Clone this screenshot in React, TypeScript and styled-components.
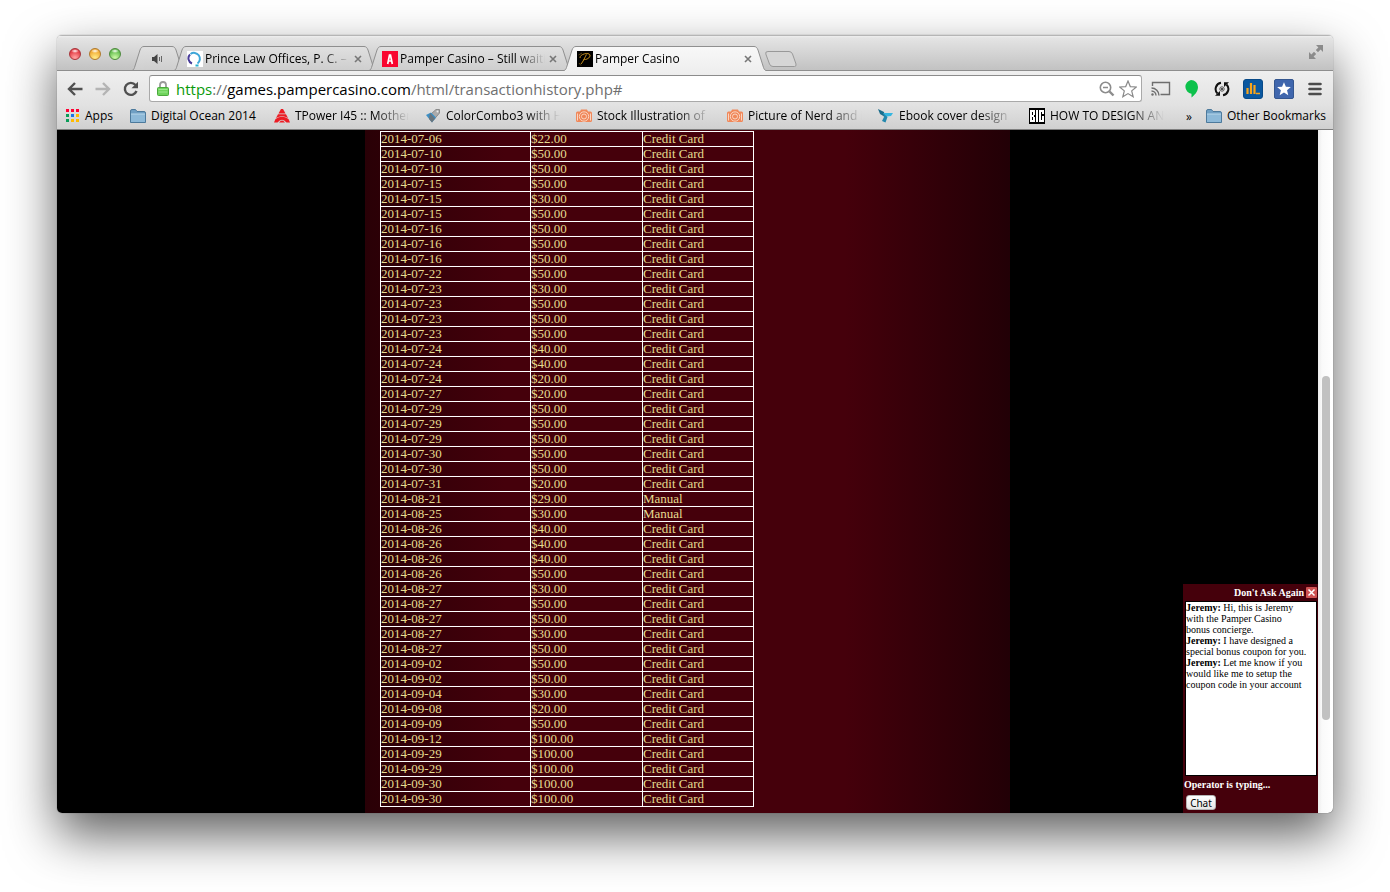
import React, { useState } from 'react';
import styled, { createGlobalStyle } from 'styled-components';

const UI = '"Noto Sans", "Open Sans", sans-serif';
const UI_NARROW = '"Open Sans", "Noto Sans", sans-serif';
const SERIF = '"Liberation Serif", "DejaVu Serif", serif';

const GlobalStyle = createGlobalStyle`
  *, *::before, *::after { box-sizing: border-box; }
  body { margin: 0; background: #fff; font-family: ${UI}; font-size: 12px; color: #000; }
  button { font: inherit; color: inherit; border: 0; padding: 0; background: none; }
  svg { display: block; flex: none; }
`;

const Desktop = styled.div`
  display: flex;
  min-height: 100vh;
  padding: 35px 57px 79px;
`;

const BrowserWindow = styled.div`
  flex: 1;
  min-width: 0;
  display: flex;
  flex-direction: column;
  overflow: hidden;
  border-radius: 5px;
  box-shadow: 0 22px 50px rgba(0, 0, 0, 0.63), 0 0 1px rgba(0, 0, 0, 0.6);
`;

/* ---------- tab strip ---------- */

const TabStrip = styled.header`
  display: flex;
  align-items: flex-end;
  height: 36px;
  padding-left: 12px;
  background: linear-gradient(#f4f4f4 0, #e4e4e4 3px, #c3c3c3 34px);
  box-shadow: inset 0 -1px #8e8e8e, inset 0 1px #b5b5b5;
`;

const Lights = styled.div`
  display: flex;
  align-self: flex-start;
  gap: 8px;
  width: 63px;
  padding-top: 13px;
`;

const Light = styled.button<{ $rim: string; $fill: string; $glow: string }>`
  width: 12px;
  height: 12px;
  border-radius: 50%;
  border: 1px solid ${(p) => p.$rim};
  background: radial-gradient(ellipse 4px 2px at 50% 20%, #fff, transparent),
    radial-gradient(circle at 50% 90%, ${(p) => p.$glow} 10%, ${(p) => p.$fill} 75%);
`;

const TabBox = styled.div<{ $small?: boolean; $active?: boolean }>`
  position: relative;
  z-index: ${(p) => (p.$active ? 2 : 1)};
  display: flex;
  flex: 0 1 ${(p) => (p.$small ? 52 : 202)}px;
  min-width: 50px;
  height: 25px;
  margin-right: ${(p) => (p.$small ? -10 : -7)}px;
`;

const TabMiddle = styled.div<{ $active?: boolean; $center?: boolean }>`
  flex: 1;
  min-width: 0;
  display: flex;
  align-items: center;
  justify-content: ${(p) => (p.$center ? 'center' : 'flex-start')};
  gap: 2px;
  padding-left: ${(p) => (p.$center ? 0 : 1)}px;
  border-top: 1px solid #8f8f8f;
  border-bottom: 1px solid ${(p) => (p.$active ? '#efefef' : '#8e8e8e')};
  background: ${(p) => (p.$active ? 'linear-gradient(#f8f8f8, #efefef)' : 'linear-gradient(#e0e0e0, #cecece)')};
`;

const TabTitle = styled.span`
  flex: 1;
  min-width: 0;
  overflow: hidden;
  white-space: nowrap;
  font-family: ${UI_NARROW};
  line-height: 20px;
  mask-image: linear-gradient(90deg, #000 calc(100% - 28px), transparent);
`;

const TabClose = styled.button`
  display: flex;
  width: 12px;
  height: 20px;
  align-items: center;
  justify-content: center;
`;

const NewTab = styled.button`
  align-self: flex-end;
  margin: 0 0 4px 6px;
`;

const FullScreen = styled.button`
  align-self: flex-start;
  margin: 10px 10px 0 auto;
`;

function TabEdge({ side, active }: { side: 'left' | 'right'; active?: boolean }) {
  const id = `edge-${side}-${active ? 'on' : 'off'}`;
  return (
    <svg width="12" height="25" viewBox="0 0 12 25" aria-hidden="true">
      <defs>
        <linearGradient id={id} x1="0" y1="0" x2="0" y2="1">
          <stop offset="0" stopColor={active ? '#f8f8f8' : '#e0e0e0'} />
          <stop offset="1" stopColor={active ? '#efefef' : '#cecece'} />
        </linearGradient>
      </defs>
      <g transform={side === 'right' ? 'matrix(-1 0 0 1 12 0)' : undefined}>
        <path d="M0 24.500C1.500 24 2 23 2.500 21.500L8 4C9 1.500 10 .5 12 .5V25H0Z" fill={`url(#${id})`} />
        <path d="M0 24.500C1.500 24 2 23 2.500 21.500L8 4C9 1.500 10 .5 12 .5" fill="none" stroke="#8f8f8f" />
        {!active && <path d="M0 24.500H12" stroke="#8e8e8e" />}
      </g>
    </svg>
  );
}

function Tab({ title, icon, active }: { title: string; icon: React.ReactNode; active?: boolean }) {
  return (
    <TabBox $active={active}>
      <TabEdge side="left" active={active} />
      <TabMiddle $active={active}>
        {icon}
        <TabTitle>{title}</TabTitle>
        <TabClose aria-label={`Close ${title}`}>
          <svg width="8" height="8" viewBox="0 0 8 8">
            <path d="M1 1l6 6M7 1L1 7" stroke="#777" strokeWidth="1.600" />
          </svg>
        </TabClose>
      </TabMiddle>
      <TabEdge side="right" active={active} />
    </TabBox>
  );
}

/* ---------- toolbar ---------- */

const Toolbar = styled.nav`
  display: flex;
  align-items: center;
  height: 34px;
  padding: 1px 3px 0 9px;
  background: linear-gradient(#efefef, #e2e2e2);
`;

const ToolButton = styled.button<{ $w: number }>`
  display: flex;
  flex: none;
  align-items: center;
  justify-content: center;
  width: ${(p) => p.$w}px;
  height: 26px;
`;

const Omnibox = styled.form`
  flex: 1;
  min-width: 0;
  display: flex;
  align-items: center;
  height: 27px;
  margin: 0 4px 0 10px;
  padding: 0 3px 0 7px;
  border: 1px solid #a9a9a9;
  border-top-color: #8c8c8c;
  border-radius: 3px;
  background: #fff;
`;

const AddressField = styled.div`
  position: relative;
  flex: 1;
  min-width: 0;
  margin-left: 7px;
  overflow: hidden;
  font-family: ${UI_NARROW};
  font-size: 15px;
  line-height: 24px;
`;

const AddressInput = styled.input`
  position: absolute;
  inset: 0;
  width: 100%;
  border: 0;
  padding: 0;
  outline: 0;
  background: transparent;
  font: inherit;
`;

const AddressText = styled.label<{ $hidden: boolean }>`
  display: block;
  white-space: nowrap;
  color: #6f6f6f;
  visibility: ${(p) => (p.$hidden ? 'hidden' : 'visible')};
  b { font-weight: 400; color: #000; }
  i { font-style: normal; color: #0a9a0a; }
`;

/* ---------- bookmarks ---------- */

const Bookmarks = styled.nav`
  display: flex;
  align-items: center;
  gap: 16px;
  height: 25px;
  padding: 0 10px 2px 9px;
  background: linear-gradient(#e2e2e2, #d0d0d0);
  border-bottom: 1px solid #7f7f7f;
  font-family: ${UI_NARROW};
`;

const Bookmark = styled.a<{ $w: number; $fade?: boolean }>`
  display: flex;
  flex: 0 0 ${(p) => p.$w}px;
  min-width: 0;
  align-items: center;
  gap: 5px;
  color: #000;
  text-decoration: none;
  white-space: nowrap;
  span {
    flex: 1;
    min-width: 0;
    overflow: ${(p) => (p.$fade ? 'hidden' : 'visible')};
    line-height: 20px;
    mask-image: ${(p) => (p.$fade ? 'linear-gradient(90deg, #000 calc(100% - 34px), transparent)' : 'none')};
  }
`;

const Overflow = styled.button`
  margin-left: auto;
  margin-right: -4px;
  width: 10px;
`;

/* ---------- page ---------- */

const Viewport = styled.div`
  position: relative;
  flex: 1;
  display: flex;
  background: #000;
`;

const Page = styled.main`
  flex: 1;
  min-width: 0;
  display: flex;
  justify-content: center;
`;

const Panel = styled.section`
  flex: 0 1 645px;
  padding: 1px 15px 6px;
  background: linear-gradient(90deg, #290006 0, #45000b 140px, #45000b 480px, #220006 100%);
`;

const History = styled.table`
  table-layout: fixed;
  width: 374px;
  border-collapse: collapse;
  color: #e6dc90;
  font-family: ${SERIF};
  font-size: 13px;
  line-height: 14px;
  td {
    height: 15px;
    padding: 0;
    border: 1px solid #fff;
    white-space: nowrap;
  }
`;

const ScrollTrack = styled.div`
  display: flex;
  flex-direction: column;
  flex: 0 0 15px;
  padding: 0 3px 0 4px;
  background: linear-gradient(90deg, #ececec, #fafafa 4px, #fff);
`;

const ScrollSpace = styled.div<{ $grow: number }>`
  flex: ${(p) => p.$grow} 0 0;
`;

const ScrollThumb = styled.div`
  flex: 344 0 0;
  border-radius: 4px;
  background: #c1c1c1;
`;

/* ---------- chat ---------- */

const Chat = styled.aside`
  position: absolute;
  right: 15px;
  bottom: 0;
  width: 135px;
  background: #45000b;
  color: #fff;
  font-family: ${SERIF};
  font-size: 10px;
  line-height: 11px;
`;

const ChatHeader = styled.div`
  display: flex;
  align-items: center;
  justify-content: flex-end;
  gap: 2px;
  height: 17px;
  padding-right: 1px;
  font-weight: 700;
`;

const ChatLog = styled.div`
  height: 175px;
  margin: 0 1px 0 2px;
  border: 1px solid #000;
  background: #fff;
  color: #000;
  p { margin: 0; white-space: nowrap; }
  b { font-weight: 700; }
`;

const ChatStatus = styled.div`
  padding: 3px 1px 5px;
  font-weight: 700;
`;

const ChatButton = styled.button`
  display: block;
  width: 30px;
  height: 15px;
  margin: 0 0 3px 3px;
  border: 1px solid #b5b5b5;
  border-radius: 3px;
  background: linear-gradient(#fff, #e6e6e6);
  color: #000;
  font-family: ${UI};
  font-size: 10px;
  line-height: 12px;
`;

/* ---------- icons ---------- */

const Folder = () => (
  <svg width="16" height="14" viewBox="0 0 16 14">
    <path d="M.5 2Q.5.500 2 .5H5.500L7 2.500H14Q15.500 2.500 15.500 4V13.500H.5Z" fill="#6f9fc3" stroke="#4d7a9c" />
    <path d="M1 5H15V13H1Z" fill="#8db9d8" />
    <path d="M1 5H15" stroke="#b9d7ea" />
  </svg>
);

const AppsGrid = () => (
  <svg width="14" height="14" viewBox="0 0 14 14">
    {['#f03', '#f03', '#f03', '#0a9d58', '#1a73e8', '#fb0', '#0a9d58', '#fb0', '#fb0'].map((c, i) => (
      <rect key={i} x={(i % 3) * 5} y={Math.floor(i / 3) * 5} width="3" height="3" fill={c} />
    ))}
  </svg>
);

const Triangle = () => (
  <svg width="16" height="14" viewBox="0 0 16 14">
    <path d="M7 0H9L11.500 4.500H4.500Z" fill="#ec1c24" />
    <path d="M4 5.300H12L14 9Q8 5.500 2 9Z" fill="#ec1c24" />
    <path d="M1.500 10Q8 5.500 14.500 10L16 13.500H12.500Q8 8 3.500 13.500H0Z" fill="#ec1c24" />
    <path d="M5 13.500Q8 9.500 11 13.500Z" fill="#ec1c24" />
  </svg>
);

const Tag = () => (
  <svg width="16" height="16" viewBox="0 0 16 16">
    <path d="M6 6L11 1.500L14.500 1.500L14.500 5L9 11.500Z" fill="#ababab" stroke="#8c8c8c" />
    <path d="M1 7L6 4.500L11 9.500L7 14.500Z" fill="#3c8fc5" />
    <path d="M5 5L10 10.500L7 14.500L4 11Z" fill="#69757d" />
    <circle cx="12.500" cy="3.500" r="1" fill="#eee" />
  </svg>
);

const Camera = () => (
  <svg width="16" height="14" viewBox="0 0 16 14">
    <path d="M5 .5H11L12 2.500H14.500Q16 2.500 16 4V11.500Q16 13 14.500 13H1.500Q0 13 0 11.500V4Q0 2.500 1.500 2.500H4Z" fill="#f0885a" />
    <circle cx="8" cy="7.500" r="4.700" fill="none" stroke="#f9d5c2" />
    <circle cx="8" cy="7.500" r="2.500" fill="none" stroke="#f9d5c2" />
    <path d="M1.500 4.500V11.500M14.500 4.500V11.500" stroke="#f9d5c2" />
  </svg>
);

const Bird = () => (
  <svg width="16" height="14" viewBox="0 0 16 14">
    <path d="M0 0L6 3L7 8L2 5Z" fill="#1b6d8c" />
    <path d="M5 4H15L13 7L8 7.500Z" fill="#35b6e0" />
    <path d="M5 4L9.500 8L7.500 13.500L4 12L6 8Z" fill="#2388ad" />
  </svg>
);

const BigLogo = () => (
  <svg width="16" height="16" viewBox="0 0 16 16" shapeRendering="crispEdges">
    <rect width="16" height="16" fill="#000" />
    <rect x="1" y="2" width="5" height="12" fill="#fff" />
    <rect x="3" y="4" width="1" height="3" />
    <rect x="3" y="9" width="1" height="3" />
    <rect x="5" y="7" width="1" height="2" />
    <rect x="7" y="2" width="2" height="12" fill="#fff" />
    <rect x="10" y="2" width="5" height="12" fill="#fff" />
    <rect x="12" y="4" width="1" height="8" />
    <rect x="13" y="6" width="2" height="2" />
  </svg>
);

const RingLogo = () => (
  <svg width="16" height="16" viewBox="0 0 16 16">
    <rect width="16" height="16" fill="#fff" />
    <path d="M3 3.500A5.500 5.500 0 0 0 5 12.500" fill="none" stroke="#4a3d9a" strokeWidth="2" />
    <path d="M3.500 3A5.500 5.500 0 1 1 10.500 12.500" fill="none" stroke="#3ea6d8" strokeWidth="2" />
    <path d="M8.500 14.500h3" stroke="#2ab0cf" strokeWidth="2" />
  </svg>
);

const RedLogo = () => (
  <svg width="16" height="16" viewBox="0 0 16 16">
    <rect width="16" height="16" fill="#f9052f" />
    <path d="M5.700 13L7.500 4H8.500L10.300 13M6.500 10H9.500" fill="none" stroke="#fff" strokeWidth="1.700" />
  </svg>
);

const CasinoLogo = () => (
  <svg width="16" height="16" viewBox="0 0 16 16">
    <rect width="16" height="16" fill="#000" />
    <path d="M4 13C6 11 8 6 9.500 3.500M3 7C2.500 3 12 1 13 4C13.500 7 9 9 6.500 8.500" fill="none" stroke="#c8921e" />
    <path d="M1.500 4L5 2M2 12L4 14.500" stroke="#5a420f" />
  </svg>
);

const Speaker = () => (
  <svg width="12" height="10" viewBox="0 0 12 10">
    <path d="M0 3H2L5.500 0V10L2 7H0Z" fill="#444" />
    <path d="M7.500 3V7M9.500 2V8" stroke="#666" />
  </svg>
);

const Back = ({ color }: { color: string }) => (
  <svg width="16" height="14" viewBox="0 0 16 14">
    <path d="M8 1L2 7L8 13M2 7H15.500" fill="none" stroke={color} strokeWidth="2.400" />
  </svg>
);

const Forward = ({ color }: { color: string }) => (
  <svg width="16" height="14" viewBox="0 0 16 14">
    <path d="M8 1L14 7L8 13M14 7H.5" fill="none" stroke={color} strokeWidth="2.400" />
  </svg>
);

const Reload = () => (
  <svg width="16" height="16" viewBox="0 0 16 16">
    <path d="M12.500 4A6 6 0 1 0 13.500 10" fill="none" stroke="#505050" strokeWidth="2.400" />
    <path d="M15 .8V7.200H8.500Z" fill="#505050" />
  </svg>
);

const Lock = () => (
  <svg width="12" height="15" viewBox="0 0 12 15">
    <path d="M3 7V4Q3 1 6 1T9 4V7" fill="none" stroke="#9a9a9a" strokeWidth="1.800" />
    <rect x=".5" y="6.500" width="11" height="8" rx="1" fill="#6fd45c" stroke="#4ba83c" />
    <path d="M1.500 8.500H10.500M1.500 11H10.500" stroke="#9be88c" />
  </svg>
);

const ZoomOut = () => (
  <svg width="16" height="16" viewBox="0 0 16 16">
    <circle cx="6.500" cy="6.500" r="5.200" fill="none" stroke="#8c8c8c" strokeWidth="1.600" />
    <path d="M4 6.500H9" stroke="#8c8c8c" strokeWidth="1.500" />
    <path d="M10.500 10.500L14.500 14.500" stroke="#8c8c8c" strokeWidth="2.400" />
  </svg>
);

const STAR = 'M9 1L11.300 6.600L17.300 7L12.700 10.900L14.200 16.800L9 13.600L3.800 16.800L5.300 10.900L.7 7L6.700 6.600Z';

const StarOutline = () => (
  <svg width="18" height="18" viewBox="0 0 18 18">
    <path d={STAR} fill="#fff" stroke="#8a8a8a" strokeWidth="1.200" />
  </svg>
);

const Cast = () => (
  <svg width="20" height="15" viewBox="0 0 20 15">
    <path d="M1.500 5V1.500H18.500V13.500H9.500" fill="none" stroke="#6e6e6e" strokeWidth="1.400" />
    <path d="M.5 7A7.500 7.500 0 0 1 8 14.500M.5 10A4.500 4.500 0 0 1 5 14.500" fill="none" stroke="#6e6e6e" strokeWidth="1.400" />
    <circle cx="1.500" cy="13.500" r="1.200" fill="#6e6e6e" />
  </svg>
);

const Bubble = () => (
  <svg width="14" height="18" viewBox="0 0 14 18">
    <path d="M7 0A7 7 0 0 1 14 7C14 12 10 15.500 7.500 17.500V13.800A7 7 0 0 1 7 0Z" fill="#0cc14b" />
  </svg>
);

const Sync = () => (
  <svg width="16" height="16" viewBox="0 0 16 16">
    <path d="M7 1.800A6.300 6.300 0 0 0 3.500 12.500M9 14.200A6.300 6.300 0 0 0 12.500 3.500" fill="none" stroke="#111" strokeWidth="2" />
    <path d="M1 14.800H6V10ZM15 1.200H10V6Z" fill="#111" />
    <circle cx="8" cy="8" r="2.200" fill="none" stroke="#555" />
    <circle cx="8" cy="8" r="1" fill="#222" />
  </svg>
);

const Bars = () => (
  <svg width="20" height="20" viewBox="0 0 20 20">
    <rect x=".5" y=".5" width="19" height="19" rx="2.500" fill="#0a58a0" stroke="#084a88" />
    <path d="M4.500 15V9M8 15V4M11.500 15V6" stroke="#f8a51b" strokeWidth="2.200" />
    <path d="M13 14.500H17" stroke="#f8a51b" strokeWidth="1.500" />
  </svg>
);

const StarBadge = () => (
  <svg width="20" height="20" viewBox="0 0 20 20">
    <rect x=".5" y=".5" width="19" height="19" rx="1.500" fill="#3f66ad" stroke="#34568f" />
    <path d={STAR} transform="translate(2.500 2.300) scale(.83)" fill="#fff" />
  </svg>
);

const Menu = () => (
  <svg width="14" height="14" viewBox="0 0 14 14">
    <path d="M1.500 2H12.500M1.500 7H12.500M1.500 12H12.500" stroke="#4c4c4c" strokeWidth="2.600" strokeLinecap="round" />
  </svg>
);

const Expand = () => (
  <svg width="14" height="14" viewBox="0 0 14 14">
    <path d="M7 0H14V7L11.600 4.600L9 7.200L6.800 5L9.400 2.400ZM0 7L2.400 9.400L5 6.800L7.200 9L4.600 11.600L7 14H0Z" fill="#8b8b8b" />
  </svg>
);

/* ---------- data ---------- */

const CARD = 'Credit Card';
const MANUAL = 'Manual';

const groups: [string, ...number[]][] = [
  ['07-06', 22],
  ['07-10', 50, 50],
  ['07-15', 50, 30, 50],
  ['07-16', 50, 50, 50],
  ['07-22', 50],
  ['07-23', 30, 50, 50, 50],
  ['07-24', 40, 40, 20],
  ['07-27', 20],
  ['07-29', 50, 50, 50],
  ['07-30', 50, 50],
  ['07-31', 20],
  ['08-21', 29],
  ['08-25', 30],
  ['08-26', 40, 40, 40, 50],
  ['08-27', 30, 50, 50, 30, 50],
  ['09-02', 50, 50],
  ['09-04', 30],
  ['09-08', 20],
  ['09-09', 50],
  ['09-12', 100],
  ['09-29', 100, 100],
  ['09-30', 100, 100],
];

const manualDays = ['08-21', '08-25'];

const transactions = groups.flatMap(([day, ...amounts]) =>
  amounts.map((amount) => ({
    date: `2014-${day}`,
    amount: `$${amount}.00`,
    method: manualDays.includes(day) ? MANUAL : CARD,
  })),
);

const bookmarks = [
  { label: 'TPower I45 :: Mother', icon: <Triangle /> },
  { label: 'ColorCombo3 with H', icon: <Tag /> },
  { label: 'Stock Illustration of', icon: <Camera /> },
  { label: 'Picture of Nerd and i', icon: <Camera /> },
  { label: 'Ebook cover design', icon: <Bird /> },
  { label: 'HOW TO DESIGN AN', icon: <BigLogo /> },
];

const ADDRESS = ['https', '://', 'games.pampercasino.com', '/html/transactionhistory.php#'];

function AddressBar() {
  const [editing, setEditing] = useState(false);
  const [value, setValue] = useState(ADDRESS.join(''));
  return (
    <Omnibox onSubmit={(e) => e.preventDefault()}>
      <Lock />
      <AddressField>
        <AddressText htmlFor="address" $hidden={editing}>
          <i>{ADDRESS[0]}</i>
          {ADDRESS[1]}
          <b>{ADDRESS[2]}</b>
          {ADDRESS[3]}
        </AddressText>
        <AddressInput
          id="address"
          value={editing ? value : ''}
          onChange={(e) => setValue(e.target.value)}
          onFocus={() => setEditing(true)}
          onBlur={() => setEditing(false)}
        />
      </AddressField>
      <ToolButton type="button" $w={22} aria-label="Zoom"><ZoomOut /></ToolButton>
      <ToolButton type="button" $w={20} aria-label="Bookmark this page"><StarOutline /></ToolButton>
    </Omnibox>
  );
}

export default function App() {
  return (
    <Desktop>
      <GlobalStyle />
      <BrowserWindow>
        <TabStrip>
          <Lights>
            <Light aria-label="Close window" $rim="#a8343a" $fill="#e0323c" $glow="#ff9a9a" />
            <Light aria-label="Minimize" $rim="#b07a2c" $fill="#f0a52c" $glow="#ffe680" />
            <Light aria-label="Zoom window" $rim="#4d8a3c" $fill="#5cb848" $glow="#c4f5a0" />
          </Lights>
          <TabBox $small>
            <TabEdge side="left" />
            <TabMiddle $center><Speaker /></TabMiddle>
            <TabEdge side="right" />
          </TabBox>
          <Tab title="Prince Law Offices, P. C. –" icon={<RingLogo />} />
          <Tab title="Pamper Casino – Still waiti" icon={<RedLogo />} />
          <Tab title="Pamper Casino" icon={<CasinoLogo />} active />
          <NewTab aria-label="New tab">
            <svg width="32" height="16" viewBox="0 0 32 16">
              <path d="M3 .5H24Q26.500.500 27.500 3L31 13Q31.500 15.500 29.500 15.500H8Q5.500 15.500 4.500 13L.8 3Q0 .5 3 .5Z" fill="#d6d6d6" stroke="#999" />
            </svg>
          </NewTab>
          <FullScreen aria-label="Full screen"><Expand /></FullScreen>
        </TabStrip>

        <Toolbar>
          <ToolButton $w={17} aria-label="Back"><Back color="#505050" /></ToolButton>
          <ToolButton $w={39} aria-label="Forward"><Forward color="#b4b4b4" /></ToolButton>
          <ToolButton $w={17} aria-label="Reload"><Reload /></ToolButton>
          <AddressBar />
          <ToolButton $w={30} aria-label="Cast"><Cast /></ToolButton>
          <ToolButton $w={30} aria-label="Hangouts"><Bubble /></ToolButton>
          <ToolButton $w={31} aria-label="Sync"><Sync /></ToolButton>
          <ToolButton $w={31} aria-label="Analytics"><Bars /></ToolButton>
          <ToolButton $w={31} aria-label="Favorites"><StarBadge /></ToolButton>
          <ToolButton $w={31} aria-label="Menu"><Menu /></ToolButton>
        </Toolbar>

        <Bookmarks>
          <Bookmark href="#" $w={48}><AppsGrid /><span>Apps</span></Bookmark>
          <Bookmark href="#" $w={128}><Folder /><span>Digital Ocean 2014</span></Bookmark>
          {bookmarks.map((b) => (
            <Bookmark key={b.label} href="#" $w={135} $fade>{b.icon}<span>{b.label}</span></Bookmark>
          ))}
          <Overflow aria-label="More bookmarks">»</Overflow>
          <Bookmark href="#" $w={117}><Folder /><span>Other Bookmarks</span></Bookmark>
        </Bookmarks>

        <Viewport>
          <Page>
            <Panel>
              <History>
                <colgroup>
                  <col width="150" />
                  <col width="112" />
                  <col />
                </colgroup>
                <tbody>
                  {transactions.map((t, i) => (
                    <tr key={i}>
                      <td>{t.date}</td>
                      <td>{t.amount}</td>
                      <td>{t.method}</td>
                    </tr>
                  ))}
                </tbody>
              </History>
            </Panel>
          </Page>
          <ScrollTrack>
            <ScrollSpace $grow={246} />
            <ScrollThumb />
            <ScrollSpace $grow={93} />
          </ScrollTrack>
          <Chat>
            <ChatHeader>
              Don't Ask Again
              <button aria-label="Close chat">
                <svg width="11" height="11" viewBox="0 0 11 11">
                  <rect width="11" height="11" rx="1" fill="#cf5252" />
                  <path d="M2.500 2.500L8.500 8.500M8.500 2.500L2.500 8.500" stroke="#fff" strokeWidth="1.500" />
                </svg>
              </button>
            </ChatHeader>
            <ChatLog>
              <p><b>Jeremy:</b> Hi, this is Jeremy<br />with the Pamper Casino<br />bonus concierge.</p>
              <p><b>Jeremy:</b> I have designed a<br />special bonus coupon for you.</p>
              <p><b>Jeremy:</b> Let me know if you<br />would like me to setup the<br />coupon code in your account</p>
            </ChatLog>
            <ChatStatus>Operator is typing...</ChatStatus>
            <ChatButton>Chat</ChatButton>
          </Chat>
        </Viewport>
      </BrowserWindow>
    </Desktop>
  );
}
